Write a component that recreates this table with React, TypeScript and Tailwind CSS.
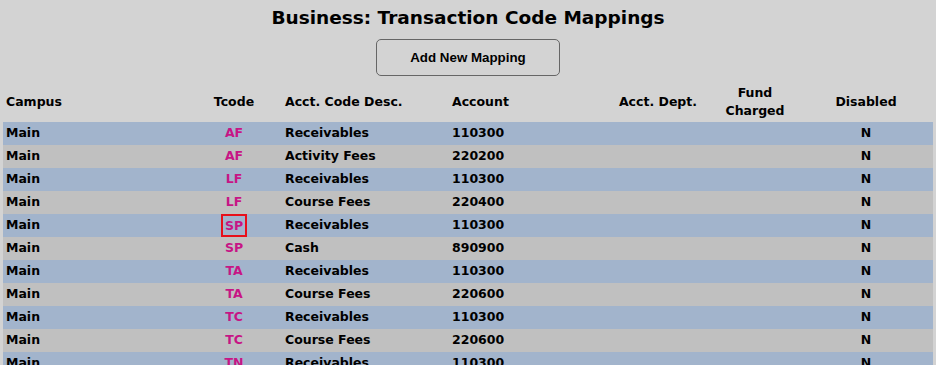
const ROWS: Array<[string, string, string, string]> = [
  ["Main", "AF", "Receivables", "110300"],
  ["Main", "AF", "Activity Fees", "220200"],
  ["Main", "LF", "Receivables", "110300"],
  ["Main", "LF", "Course Fees", "220400"],
  ["Main", "SP", "Receivables", "110300"],
  ["Main", "SP", "Cash", "890900"],
  ["Main", "TA", "Receivables", "110300"],
  ["Main", "TA", "Course Fees", "220600"],
  ["Main", "TC", "Receivables", "110300"],
  ["Main", "TC", "Course Fees", "220600"],
  ["Main", "TN", "Receivables", "110300"],
];

const SELECTED = 4;

export default function App() {
  return (
    <div
      className="min-h-screen bg-[#d3d3d3] px-[3px] text-black"
      style={{ fontFamily: '"Century Gothic", "DejaVu Sans", sans-serif' }}
    >
      <h1 className="pt-[6px] text-center text-[18.5px] font-bold leading-[24px]">
        Business: Transaction Code Mappings
      </h1>

      <div className="mt-[9px] flex justify-center">
        <button
          className="h-[37px] w-[184px] rounded-[5px] border border-[#666] bg-transparent text-[13.33px] font-bold text-black"
          style={{ fontFamily: '"Liberation Sans", Arial, sans-serif' }}
        >
          Add New Mapping
        </button>
      </div>

      <table className="mt-[5px] w-[930px] table-fixed border-collapse text-[12.5px] font-bold">
        <colgroup>
          <col className="w-[182px]" />
          <col className="w-[98px]" />
          <col className="w-[167px]" />
          <col className="w-[155px]" />
          <col className="w-[106px]" />
          <col className="w-[88px]" />
          <col className="w-[134px]" />
        </colgroup>
        <thead>
          <tr className="h-[41px] leading-[18px]">
            <th className="px-[3px] text-left align-middle">Campus</th>
            <th className="text-center align-middle">Tcode</th>
            <th className="px-[2px] text-left align-middle">Acct. Code Desc.</th>
            <th className="px-[2px] text-left align-middle">Account</th>
            <th className="text-center align-middle">Acct. Dept.</th>
            <th className="text-center align-middle">
              Fund
              <br />
              Charged
            </th>
            <th className="text-center align-middle">Disabled</th>
          </tr>
        </thead>
        <tbody>
          {ROWS.map(([campus, tcode, desc, account], i) => (
            <tr key={i} className={i % 2 === 0 ? "h-[23px] bg-[#a2b4cc]" : "h-[23px] bg-[#c0c0c0]"}>
              <td className="px-[3px] py-0">{campus}</td>
              <td className="p-0 text-center text-[#c71585]">
                {i === SELECTED ? (
                  <span className="inline-block h-[23px] border-2 border-[#e8101a] px-[2px] leading-[19px]">
                    {tcode}
                  </span>
                ) : (
                  tcode
                )}
              </td>
              <td className="px-[2px] py-0">{desc}</td>
              <td className="px-[2px] py-0">{account}</td>
              <td className="p-0" />
              <td className="p-0" />
              <td className="p-0 text-center">N</td>
            </tr>
          ))}
        </tbody>
      </table>
    </div>
  );
}
